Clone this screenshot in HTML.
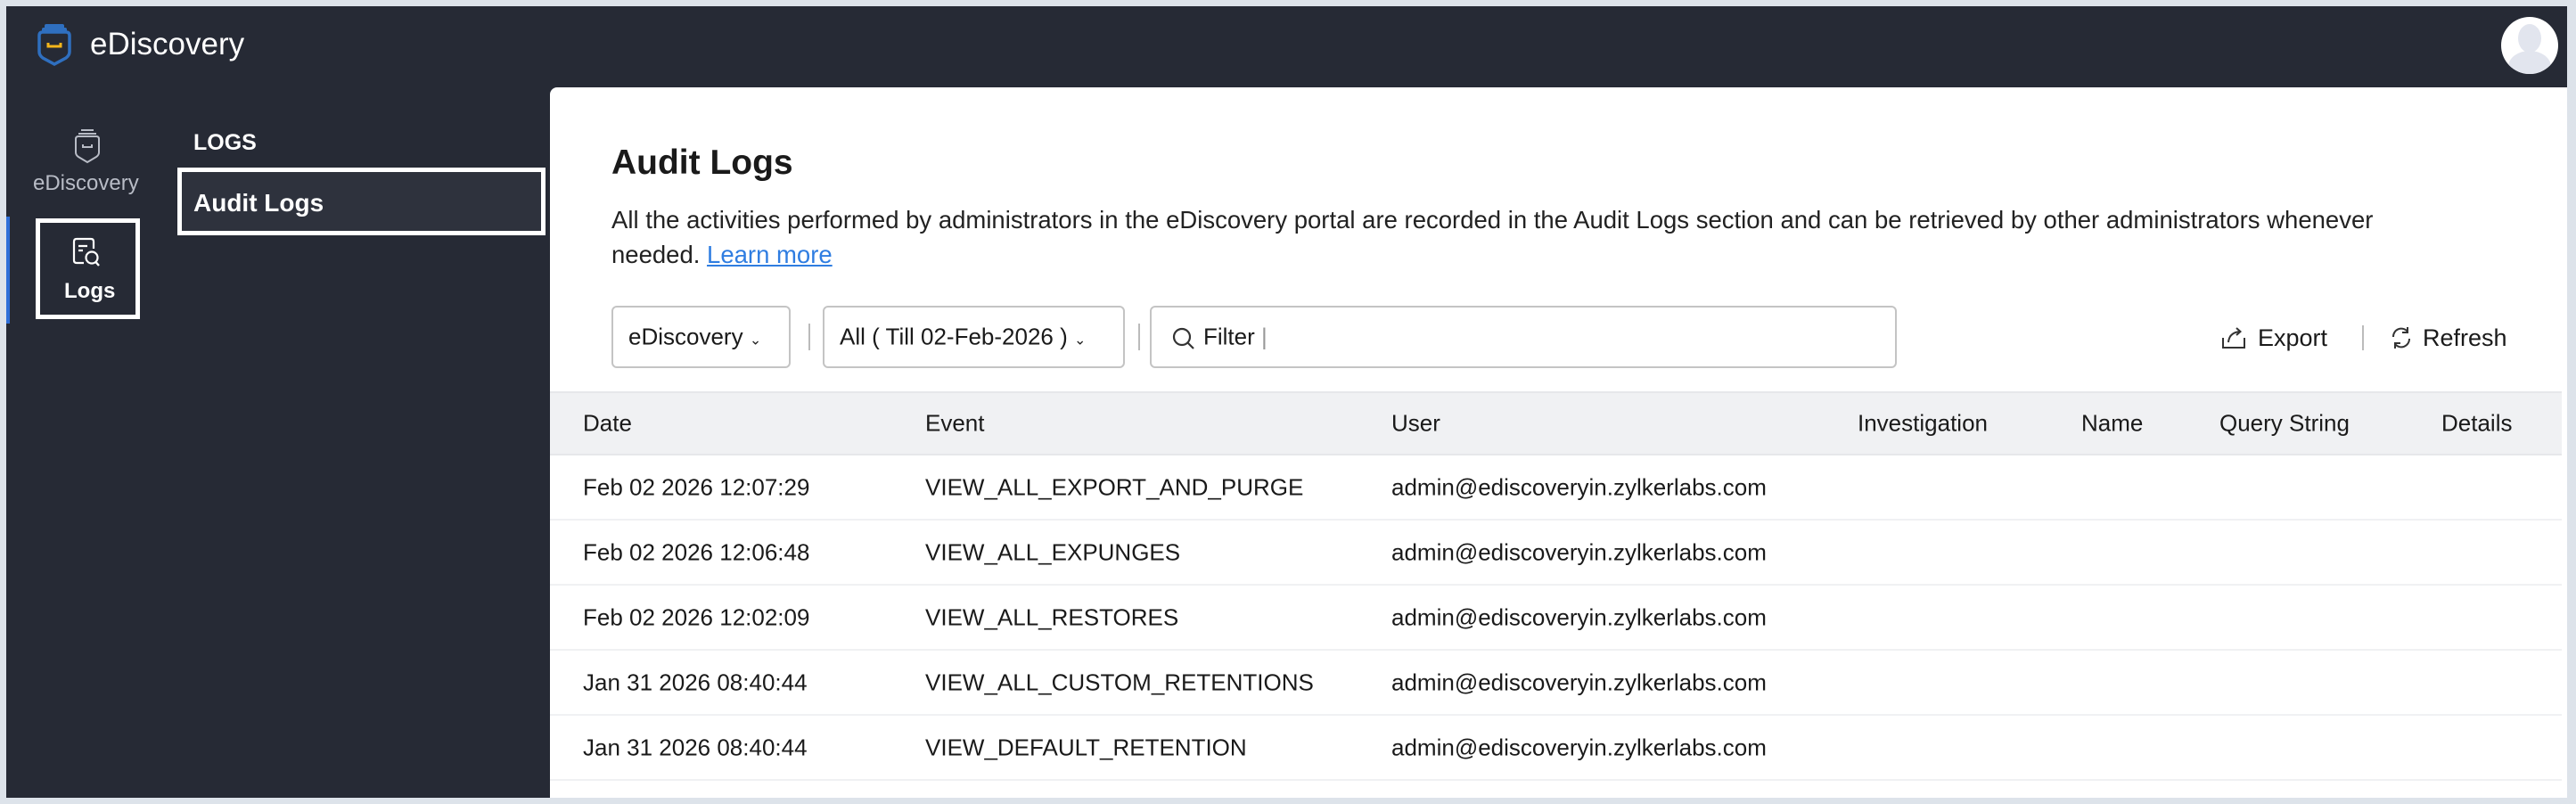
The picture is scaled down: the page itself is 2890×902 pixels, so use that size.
<!DOCTYPE html>
<html><head><meta charset="utf-8"><style>
*{margin:0;padding:0;box-sizing:border-box}
body{width:2890px;height:902px;background:#dde3ea;font-family:"Liberation Sans",sans-serif;position:relative;overflow:hidden;color:#1a1a1a}
.frame{position:absolute;left:7px;top:7px;width:2873px;height:888px;background:#262a35;overflow:hidden}
.abs{position:absolute}
.panel{position:absolute;left:610px;top:91px;width:2263px;height:800px;background:#fff;border-top-left-radius:8px}
.t{position:absolute;white-space:nowrap}
.box{position:absolute;border:2px solid #c4c4c4;border-radius:6px;background:#fff;height:70px;top:245px}
.hdr{position:absolute;left:0;top:341px;width:2257px;height:72px;background:#f0f1f3;border-top:2px solid #e6e7ea;border-bottom:2px solid #e6e7ea}
.row{position:absolute;left:0;width:2257px;height:73px;border-bottom:2px solid #f0f1f3}
.cell{position:absolute;top:50%;transform:translateY(-50%);font-size:26px;white-space:nowrap}
</style></head><body>
<div class="frame">
  <svg class="abs" style="left:33px;top:19px" width="42" height="48" viewBox="0 0 42 48">
    <path d="M4 14 Q4 10 8 10 H34 Q38 10 38 14 V32 Q38 36 34 39 L21 46 L8 39 Q4 36 4 32 Z" fill="none" stroke="#2f6fbf" stroke-width="3.5"/>
    <rect x="10" y="1" width="22" height="6" rx="2" fill="#2f6fbf"/>
    <rect x="7" y="5" width="28" height="6" rx="2" fill="#2f6fbf"/>
    <path d="M14 22 V26 H28 V22" fill="none" stroke="#f3b51b" stroke-width="3"/>
  </svg>
  <div class="t" style="left:94px;top:23px;font-size:35px;color:#fff">eDiscovery</div>
  <div class="abs" style="left:2799px;top:12px;width:64px;height:64px;border-radius:50%;background:#fff;overflow:hidden">
    <div class="abs" style="left:19px;top:8px;width:26px;height:32px;border-radius:50%;background:#e2e5ee"></div>
    <div class="abs" style="left:8px;top:38px;width:48px;height:36px;border-radius:50% 50% 0 0;background:#e2e5ee"></div>
  </div>
  <svg class="abs" style="left:75px;top:137px" width="32" height="40" viewBox="0 0 32 40">
    <path d="M3 12 Q3 9 6 9 H26 Q29 9 29 12 V27 Q29 30 26 32 L16 38 L6 32 Q3 30 3 27 Z" fill="none" stroke="#b8bcc6" stroke-width="2"/>
    <path d="M9 2 H23 M6 6 H26" stroke="#b8bcc6" stroke-width="2"/>
    <path d="M11 18 V21 H21 V18" fill="none" stroke="#b8bcc6" stroke-width="2"/>
  </svg>
  <div class="t" style="left:30px;top:185px;font-size:24px;color:#b8bcc6">eDiscovery</div>
  <div class="abs" style="left:0;top:236px;width:4px;height:120px;background:#2f6fd8"></div>
  <div class="abs" style="left:33px;top:238px;width:117px;height:113px;border:5px solid #fff"></div>
  <svg class="abs" style="left:73px;top:258px" width="34" height="38" viewBox="0 0 34 38">
    <path d="M14 30 H6 Q3 30 3 27 V6 Q3 3 6 3 H22 Q25 3 25 6 V14" fill="none" stroke="#fff" stroke-width="2.2"/>
    <path d="M8 11 H18 M8 16 H13" stroke="#fff" stroke-width="2.2"/>
    <circle cx="23" cy="24" r="6.5" fill="none" stroke="#fff" stroke-width="2.2"/>
    <path d="M27.5 29 L31 33" stroke="#fff" stroke-width="2.4"/>
  </svg>
  <div class="t" style="left:65px;top:306px;font-size:24px;font-weight:bold;color:#fff">Logs</div>
  <div class="t" style="left:210px;top:139px;font-size:25px;font-weight:bold;color:#fff">LOGS</div>
  <div class="abs" style="left:192px;top:181px;width:413px;height:76px;border:5px solid #fff;background:#2e323d"></div>
  <div class="t" style="left:210px;top:205px;font-size:28px;font-weight:bold;color:#fff">Audit Logs</div>

  <div class="panel">
    <div class="t" style="left:69px;top:63px;font-size:39px;font-weight:bold">Audit Logs</div>
    <div class="t" style="left:69px;top:129px;font-size:27.5px;line-height:39px;color:#222">All the activities performed by administrators in the eDiscovery portal are recorded in the Audit Logs section and can be retrieved by other administrators whenever<br>needed. <span style="color:#2f7de1;text-decoration:underline">Learn more</span></div>
    <div class="box" style="left:69px;width:201px"><span class="cell" style="left:17px">eDiscovery <span style="font-size:16px">&#8964;</span></span></div>
    <div class="abs" style="left:290px;top:265px;width:2px;height:30px;background:#bbb"></div>
    <div class="box" style="left:306px;width:339px"><span class="cell" style="left:17px">All ( Till 02-Feb-2026 ) <span style="font-size:16px">&#8964;</span></span></div>
    <div class="abs" style="left:660px;top:265px;width:2px;height:30px;background:#bbb"></div>
    <div class="box" style="left:673px;width:838px">
      <svg class="abs" style="left:22px;top:21px" width="28" height="28" viewBox="0 0 28 28"><circle cx="12" cy="12" r="9" fill="none" stroke="#333" stroke-width="2.2"/><path d="M18.5 18.5 L25 25" stroke="#333" stroke-width="2.2"/></svg>
      <span class="cell" style="left:58px">Filter <span style="color:#999;font-weight:100">|</span></span>
    </div>
    <svg class="abs" style="left:1874px;top:267px" width="30" height="28" viewBox="0 0 30 28"><path d="M3 14 V25 H27 V14" fill="none" stroke="#333" stroke-width="2"/><path d="M9 19 Q10 8 22 7" fill="none" stroke="#333" stroke-width="2"/><path d="M18 3 L22.5 7 L18 11" fill="none" stroke="#333" stroke-width="2"/></svg>
    <div class="t" style="left:1916px;top:266px;font-size:27px">Export</div>
    <div class="abs" style="left:2033px;top:267px;width:2px;height:28px;background:#bbb"></div>
    <svg class="abs" style="left:2063px;top:266px" width="28" height="30" viewBox="0 0 28 30"><path d="M5 14 A9 9 0 0 1 21 8" fill="none" stroke="#333" stroke-width="2"/><path d="M21 3 V9 H15" fill="none" stroke="#333" stroke-width="2"/><path d="M23 16 A9 9 0 0 1 7 22" fill="none" stroke="#333" stroke-width="2"/><path d="M7 27 V21 H13" fill="none" stroke="#333" stroke-width="2"/></svg>
    <div class="t" style="left:2101px;top:266px;font-size:27px">Refresh</div>

    <div class="hdr">
      <span class="cell" style="left:37px">Date</span>
      <span class="cell" style="left:421px">Event</span>
      <span class="cell" style="left:944px">User</span>
      <span class="cell" style="left:1467px">Investigation</span>
      <span class="cell" style="left:1718px">Name</span>
      <span class="cell" style="left:1873px">Query String</span>
      <span class="cell" style="left:2122px">Details</span>
    </div>
    <div class="row" style="top:413px"><span class="cell" style="left:37px">Feb 02 2026 12:07:29</span><span class="cell" style="left:421px">VIEW_ALL_EXPORT_AND_PURGE</span><span class="cell" style="left:944px">admin@ediscoveryin.zylkerlabs.com</span></div>
    <div class="row" style="top:486px"><span class="cell" style="left:37px">Feb 02 2026 12:06:48</span><span class="cell" style="left:421px">VIEW_ALL_EXPUNGES</span><span class="cell" style="left:944px">admin@ediscoveryin.zylkerlabs.com</span></div>
    <div class="row" style="top:559px"><span class="cell" style="left:37px">Feb 02 2026 12:02:09</span><span class="cell" style="left:421px">VIEW_ALL_RESTORES</span><span class="cell" style="left:944px">admin@ediscoveryin.zylkerlabs.com</span></div>
    <div class="row" style="top:632px"><span class="cell" style="left:37px">Jan 31 2026 08:40:44</span><span class="cell" style="left:421px">VIEW_ALL_CUSTOM_RETENTIONS</span><span class="cell" style="left:944px">admin@ediscoveryin.zylkerlabs.com</span></div>
    <div class="row" style="top:705px"><span class="cell" style="left:37px">Jan 31 2026 08:40:44</span><span class="cell" style="left:421px">VIEW_DEFAULT_RETENTION</span><span class="cell" style="left:944px">admin@ediscoveryin.zylkerlabs.com</span></div>
  </div>
</div>
</body></html>
